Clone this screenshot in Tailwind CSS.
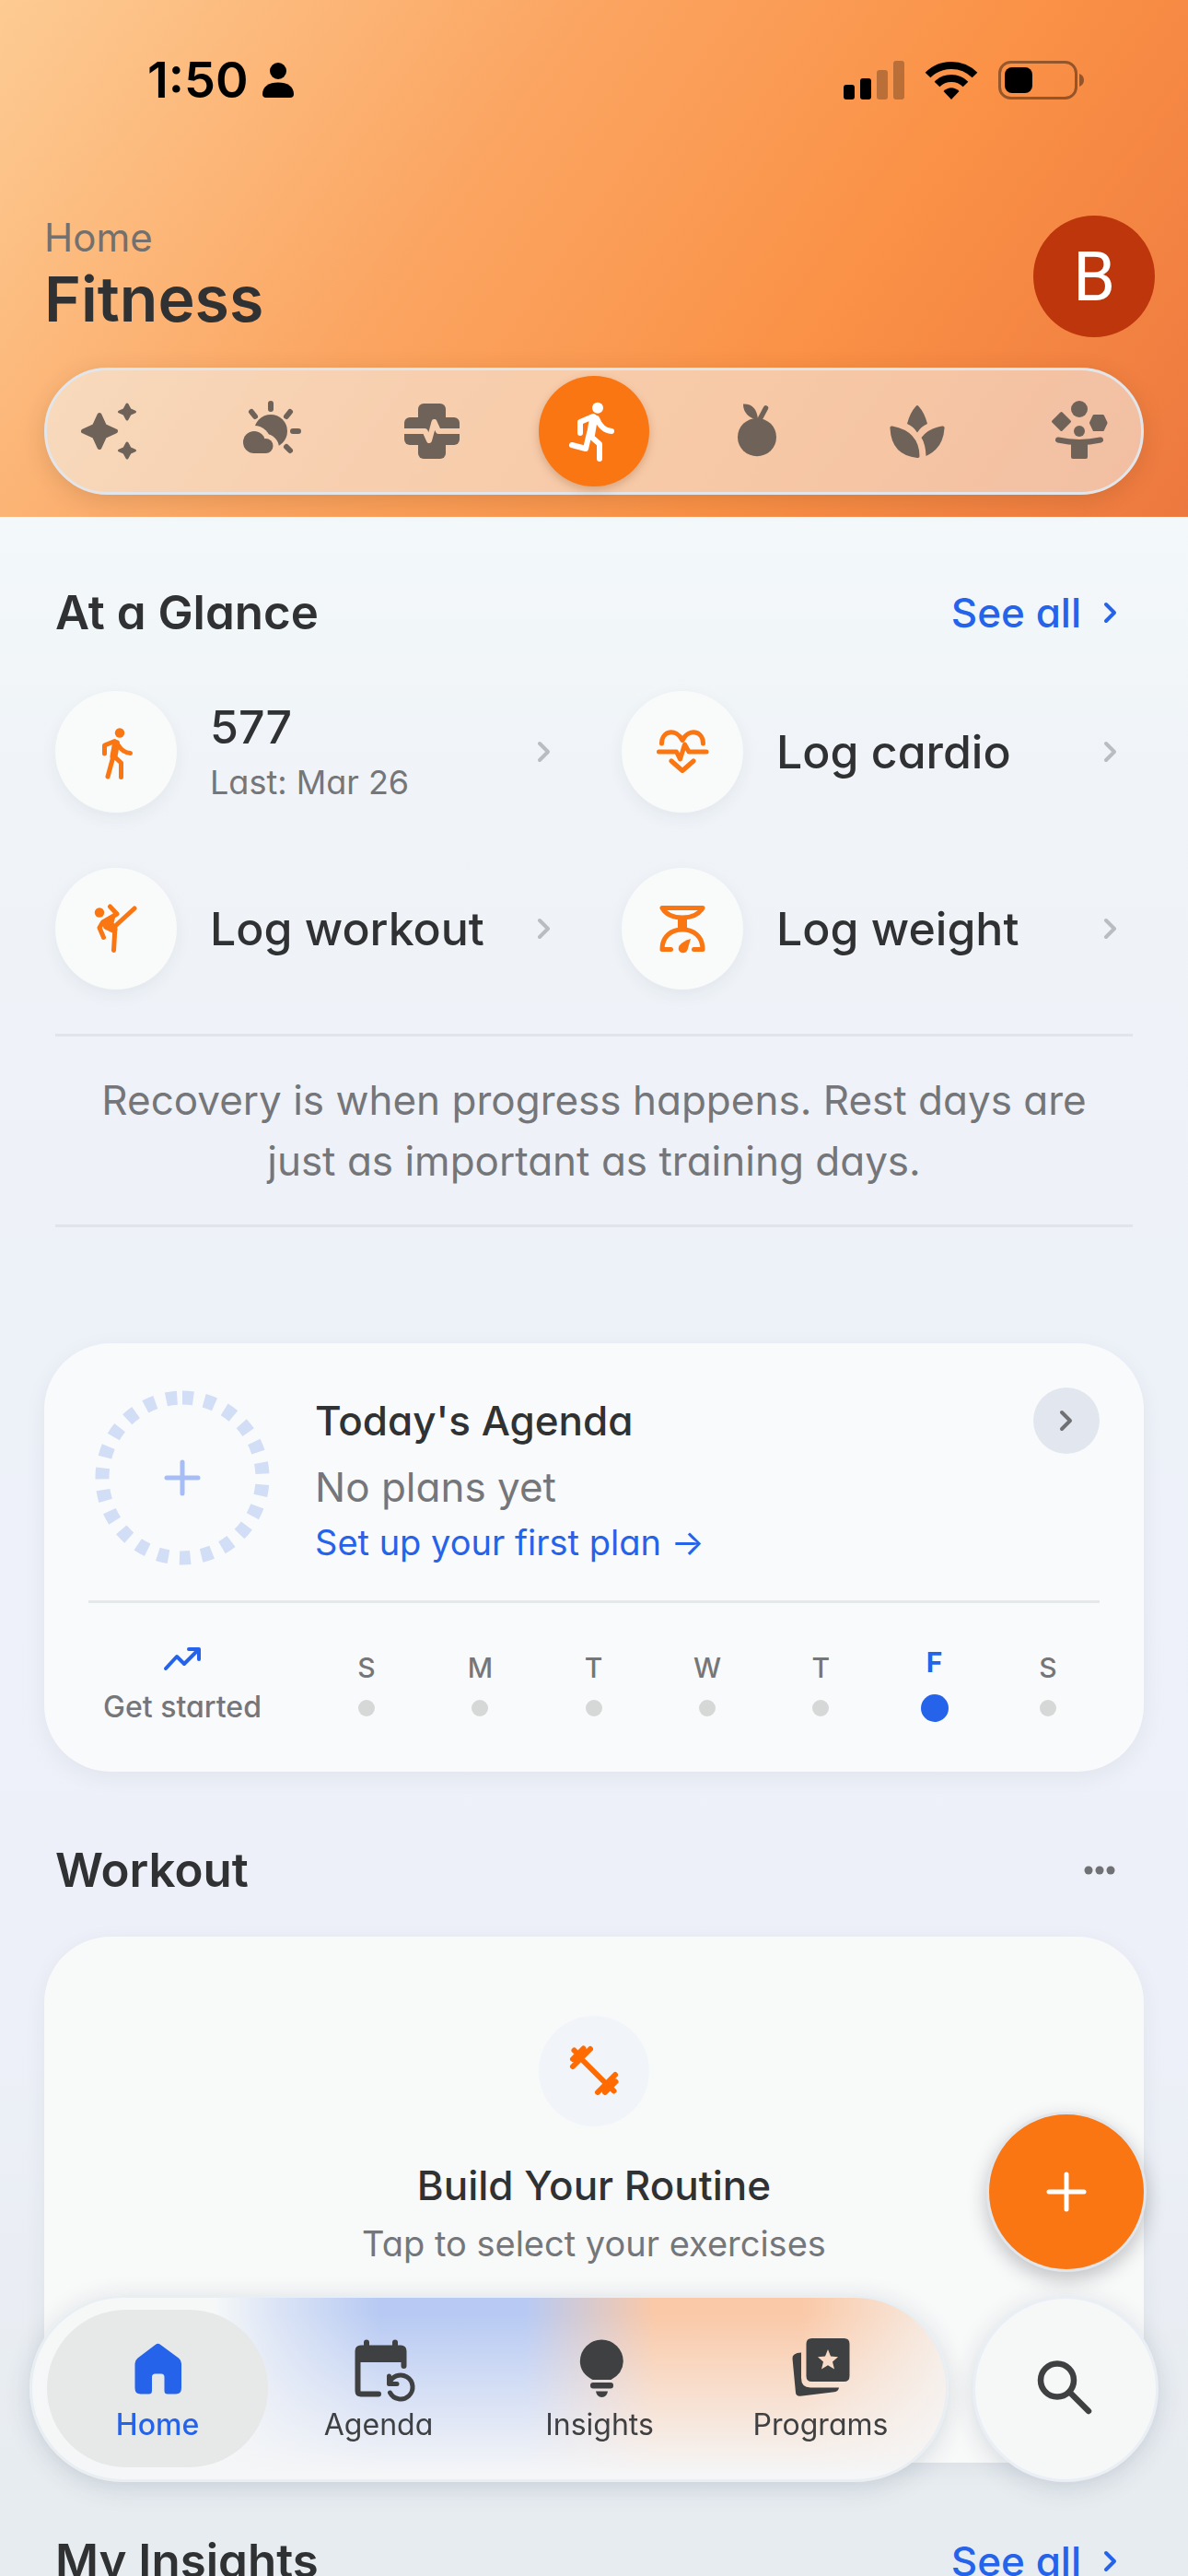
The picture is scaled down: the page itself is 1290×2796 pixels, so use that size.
<!DOCTYPE html>
<html lang="en">
<head>
  <meta charset="UTF-8" />
  <meta name="viewport" content="width=device-width, initial-scale=1.0"/>
  <title>Fitness</title>
  <script src="https://cdn.jsdelivr.net/npm/@tailwindcss/browser@4"></script>
</head>
<body class="h-screen overflow-hidden bg-[linear-gradient(to_bottom,#f3f8fa_20%,#f0f4f8_30%,#edf1f8_55%,#edf0f8_78%,#e7ecf0_97%)] font-[Inter,sans-serif] [font-feature-settings:'cv11'] text-[#303133]">

  <!-- Header -->
  <header class="bg-[linear-gradient(125deg,#fdcb93_0%,#fba562_38%,#fa9146_68%,#ed783f_100%)] pl-12 pr-9 pb-6">
    <div class="flex h-[174px] items-center justify-between pl-[112px] pr-[76px] text-black">
      <div class="flex items-center gap-3.5">
        <span class="text-[54px] leading-[60px] font-semibold">1:50</span>
        <svg class="h-10 w-9" viewBox="0 0 36 40" fill="currentColor" aria-hidden="true"><circle cx="18" cy="10" r="9"/><path d="M1 35C1 27 8 22.500 18 22.500S35 27 35 35Q35 39 31 39H5Q1 39 1 35Z"/></svg>
      </div>
      <div class="flex items-center gap-[22px]">
        <svg class="h-[42px] w-[66px]" viewBox="0 0 66 42" fill="currentColor" aria-hidden="true"><rect y="26" width="12" height="16" rx="3"/><rect x="18" y="19" width="12" height="23" rx="3"/><g opacity=".25"><rect x="36" y="10" width="12" height="32" rx="3"/><rect x="54" width="12" height="42" rx="3"/></g></svg>
        <svg class="h-[42px] w-[58px]" viewBox="0 0 58 42" aria-hidden="true"><g fill="none" stroke="currentColor" stroke-width="8"><path d="M3.500 15.500a36 36 0 0 1 51 0"/><path d="M13.500 25.500a22 22 0 0 1 31 0"/></g><path fill="currentColor" d="M29 42l-8.500-9q8.500-7.500 17 0z"/></svg>
        <svg class="h-[42px] w-[94px]" viewBox="0 0 94 42" aria-hidden="true"><rect x="1.500" y="1.500" width="83" height="39" rx="12" fill="none" stroke="#000" stroke-opacity=".4" stroke-width="3"/><rect x="7" y="7" width="30" height="28" rx="8"/><path d="M88 14q5 2 5 7t-5 7z" fill-opacity=".4"/></svg>
      </div>
    </div>

    <div class="mt-[60px] flex items-center justify-between">
      <div>
        <p class="text-[42px] leading-[48px] text-[#73706e]">Home</p>
        <h1 class="text-[68px] leading-[84px] font-semibold">Fitness</h1>
      </div>
      <button class="size-[132px] rounded-full bg-[#bd360c] font-[Roboto,sans-serif] text-[74px] text-white" aria-label="Profile">B</button>
    </div>

    <nav class="mt-[33px] mr-3 flex items-center justify-between rounded-full border-3 border-[#e2e5ea] bg-[#f4f6f4]/55 px-[7px] py-1.5 text-[#6f6259] shadow-[0_6px_24px_rgba(80,50,20,0.16)]">
      <button class="grid size-[120px] place-items-center" aria-label="Overview">
        <svg class="size-18" viewBox="0 0 72 72" fill="currentColor" stroke="currentColor" stroke-width="5" stroke-linejoin="round"><path d="M26 18.500l5.500 12 12 5.500-12 5.500-5.500 12-5.500-12-12-5.500 12-5.500z"/><path stroke-width="3" d="M56 7l3 5.500 5.500 2.500-5.500 2.500-3 5.500-3-5.500-5.500-2.500 5.500-2.500zM56 49l3 5.500 5.500 2.500-5.500 2.500-3 5.500-3-5.500-5.500-2.500 5.500-2.500z"/></svg>
      </button>
      <button class="grid size-[120px] place-items-center" aria-label="Weather">
        <svg class="size-18" viewBox="0 0 72 72" fill="currentColor"><mask id="sun"><path fill="#fff" d="M0 0h72v72H0z"/><circle cx="18" cy="48" r="18" fill="#000"/><circle cx="30" cy="54" r="15" fill="#000"/></mask><circle cx="36" cy="36" r="18" mask="url(#sun)"/><path d="M36 6v6M15 15l4 5M57 15l-4 5M60 36h6M53 53l4 4" fill="none" stroke="currentColor" stroke-width="6" stroke-linecap="round"/><circle cx="18" cy="48" r="12"/><circle cx="30.500" cy="52" r="8"/><path d="M17 50h14v10H17z"/></svg>
      </button>
      <button class="grid size-[120px] place-items-center" aria-label="Health">
        <svg class="size-18" viewBox="0 0 72 72" fill="currentColor"><mask id="pulse"><path fill="#fff" d="M0 0h72v72H0z"/><path d="M0 36h28.500l4.500 10 5.500-20 4.500 10h29" fill="none" stroke="#000" stroke-width="6" stroke-linejoin="round"/></mask><g mask="url(#pulse)"><rect x="21" y="6" width="30" height="60" rx="6"/><rect x="6" y="21" width="60" height="30" rx="6"/></g></svg>
      </button>
      <button class="grid size-[120px] place-items-center rounded-full bg-[#f97613] text-white shadow-[0_4px_10px_rgba(120,60,20,0.25)]" aria-label="Fitness" aria-current="page">
        <svg class="size-18" viewBox="0 0 72 72" fill="none" stroke="currentColor" stroke-width="6" stroke-linecap="round" stroke-linejoin="round"><circle cx="40" cy="10.700" r="6" fill="currentColor" stroke="none"/><path d="M21 38V26l14-6M39 22q5 13 16 14M33 42l9 8v16M31 38l-4 17-15-4"/><path stroke-width="9" d="M35.500 22l-3 18"/></svg>
      </button>
      <button class="grid size-[120px] place-items-center" aria-label="Nutrition">
        <svg class="size-18" viewBox="0 0 72 72" fill="currentColor"><ellipse cx="37" cy="42.500" rx="21" ry="20.700"/><path d="M22 6.500Q37 6 38 24Q22 20 22 6.500Z"/><path d="M46.500 11L39 25" stroke="currentColor" stroke-width="5.500" stroke-linecap="round"/></svg>
      </button>
      <button class="grid size-[120px] place-items-center" aria-label="Mindfulness">
        <svg class="size-18" viewBox="0 0 72 72" fill="currentColor"><path d="M34.500 9Q36 7 37.500 9Q44 16 47 28Q40 31 36 37.500Q32 31 25 28Q28 16 34.500 9Z"/><path d="M6.500 33Q6 30 9 30.500Q38 36 38.500 63Q38.500 65.500 36 65Q8 62 6.500 33Z"/><path d="M40.500 43Q48 33 63 30.500Q66 30 65.500 33Q64 55 45.500 63Q45 50 40.500 43Z"/></svg>
      </button>
      <button class="grid size-[120px] place-items-center" aria-label="Activities">
        <svg class="size-18" viewBox="0 0 72 72" fill="currentColor" stroke="currentColor" stroke-linejoin="round"><g stroke="none"><circle cx="36" cy="12" r="9"/><circle cx="36" cy="36" r="6"/><rect x="27" y="46" width="18" height="20" rx="2"/></g><path stroke-width="3" d="M16.500 16.500l9 9-9 9-9-9zM52 19.500h9.500l3.500 7.500-3.500 7.500H52L48.500 27z"/><path d="M13 45.500q23 5 46 0" fill="none" stroke-width="6" stroke-linecap="round"/></svg>
      </button>
    </nav>
  </header>

  <main>
    <!-- At a Glance -->
    <section class="px-15 pt-[68px]">
      <div class="flex items-center justify-between pr-4">
        <h2 class="text-[51px] leading-[72px] font-semibold">At a Glance</h2>
        <a href="#" class="flex items-center gap-6 text-[44px] leading-[72px] font-medium text-[#2563eb]">See all
          <svg class="h-7 w-4" viewBox="0 0 16 28" fill="none" stroke="currentColor" stroke-width="4" stroke-linecap="round" stroke-linejoin="round"><path d="M3 5l9 9-9 9"/></svg>
        </a>
      </div>

      <div class="mt-[49px] grid grid-cols-2 gap-15">
        <a href="#" class="flex items-center pr-4">
          <span class="grid size-[132px] place-items-center rounded-full bg-[#f9fafa] text-[#f97613] shadow-[0_6px_18px_rgba(30,50,70,0.06)]">
            <svg class="size-15" viewBox="0 0 60 60" fill="none" stroke="currentColor" stroke-width="5" stroke-linecap="round" stroke-linejoin="round"><circle cx="34" cy="9.500" r="5.200" fill="currentColor" stroke="none"/><path d="M17.500 32v-9l11-4.500M32.500 23q5 8 13 8.500M27 35l-6 22M28 35l7.500 7v15.500"/><path stroke-width="8" d="M30 21l-2.500 14"/></svg>
          </span>
          <span class="ml-9 flex-1">
            <span class="block text-[50px] leading-[66px] font-medium">577</span>
            <span class="block text-[36px] leading-[54px] text-[#75767a]">Last: Mar 26</span>
          </span>
          <svg class="h-7 w-4" viewBox="0 0 16 28" fill="none" stroke="#b9bcc0" stroke-width="4" stroke-linecap="round" stroke-linejoin="round"><path d="M3 5l9 9-9 9"/></svg>
        </a>
        <a href="#" class="flex items-center pr-4">
          <span class="grid size-[132px] place-items-center rounded-full bg-[#f9fafa] text-[#f97613] shadow-[0_6px_18px_rgba(30,50,70,0.06)]">
            <svg class="size-15" viewBox="0 0 60 60" fill="none" stroke="currentColor" stroke-width="5" stroke-linecap="round" stroke-linejoin="round"><path d="M7.500 21C7.500 7 23 4 30 17.500C37 4 52.500 7 52.500 21M4.500 30h19l4 8 5-16 4.500 8h19M18 40l12 10.500L42 40"/></svg>
          </span>
          <span class="ml-9 flex-1 text-[50px] leading-[66px] font-medium">Log cardio</span>
          <svg class="h-7 w-4" viewBox="0 0 16 28" fill="none" stroke="#b9bcc0" stroke-width="4" stroke-linecap="round" stroke-linejoin="round"><path d="M3 5l9 9-9 9"/></svg>
        </a>
        <a href="#" class="flex items-center pr-4">
          <span class="grid size-[132px] place-items-center rounded-full bg-[#f9fafa] text-[#f97613] shadow-[0_6px_18px_rgba(30,50,70,0.06)]">
            <svg class="size-15" viewBox="0 0 60 60" fill="none" stroke="currentColor" stroke-width="5" stroke-linecap="round" stroke-linejoin="round"><circle cx="12" cy="12.500" r="5.200" fill="currentColor" stroke="none"/><path d="M23.500 6l7.500 8-15.500 9-3.500 6 4.500 10.500M27 29L50 8M29 28l-1.500 25.500"/><path fill="currentColor" stroke-width="3" d="M16 22l12-6-2 8 4 7-4 2-8-4z"/></svg>
          </span>
          <span class="ml-9 flex-1 text-[50px] leading-[66px] font-medium">Log workout</span>
          <svg class="h-7 w-4" viewBox="0 0 16 28" fill="none" stroke="#b9bcc0" stroke-width="4" stroke-linecap="round" stroke-linejoin="round"><path d="M3 5l9 9-9 9"/></svg>
        </a>
        <a href="#" class="flex items-center pr-4">
          <span class="grid size-[132px] place-items-center rounded-full bg-[#f9fafa] text-[#f97613] shadow-[0_6px_18px_rgba(30,50,70,0.06)]">
            <svg class="size-15" viewBox="0 0 60 60" fill="none" stroke="currentColor" stroke-width="5" stroke-linecap="round" stroke-linejoin="round"><path d="M8 7.500h44q-6 10.500-22 10.500T8 7.500zM17.500 52.500H8C8 38 18 31 30 31s22 7 22 21.500h-9.500"/><path stroke-width="10" stroke-linecap="butt" d="M30 18v13"/><path stroke="none" fill="currentColor" d="M39 41l-3.500 12q-2 4-6.500 3-5-2-2.500-7.500Q31 43 39 41z"/></svg>
          </span>
          <span class="ml-9 flex-1 text-[50px] leading-[66px] font-medium">Log weight</span>
          <svg class="h-7 w-4" viewBox="0 0 16 28" fill="none" stroke="#b9bcc0" stroke-width="4" stroke-linecap="round" stroke-linejoin="round"><path d="M3 5l9 9-9 9"/></svg>
        </a>
      </div>

      <p class="mt-12 border-y-3 border-[#e1e5eb] px-9 py-9 text-center text-[44px] leading-[66px] text-[#75767a]">Recovery is when progress happens. Rest days are just as important as training days.</p>
    </section>

    <!-- Agenda card -->
    <section class="mx-12 mt-[126px] rounded-[72px] bg-[#f9fafb] px-12 pt-12 shadow-[0_6px_24px_rgba(30,50,70,0.06)]">
      <div class="flex border-b-3 border-[#e3e8ea] pb-9">
        <div class="flex w-[204px] items-center justify-center">
          <svg class="size-48" viewBox="0 0 192 192" fill="none"><circle cx="96" cy="96" r="87" stroke="#d2ddf6" stroke-width="15" stroke-dasharray="12 12" transform="rotate(-90 96 96)"/><path d="M96 79v34M79 96h34" stroke="#a6bdf5" stroke-width="5" stroke-linecap="round"/></svg>
        </div>
        <div class="ml-[42px] flex-1 pt-[3px]">
          <h3 class="text-[44px] leading-[66px] font-medium">Today's Agenda</h3>
          <p class="mt-1.5 text-[44px] leading-[66px] text-[#75767a]">No plans yet</p>
          <a href="#" class="block text-[38px] leading-[54px] text-[#2563eb]">Set up your first plan →</a>
        </div>
        <button class="grid size-18 place-items-center rounded-full bg-[#e2e7ef]" aria-label="Open agenda">
          <svg class="h-7 w-4" viewBox="0 0 16 28" fill="none" stroke="#707175" stroke-width="4" stroke-linecap="round" stroke-linejoin="round"><path d="M3 5l9 9-9 9"/></svg>
        </button>
      </div>
      <div class="flex items-center justify-between pt-[38px] pr-[26px] pb-[46px] text-[30px] leading-9 font-medium text-[#75767a]">
        <div class="flex w-[204px] flex-col items-center gap-[9px] pb-1.5">
          <svg class="size-12" viewBox="0 0 48 48" fill="none" stroke="#2563eb" stroke-width="4" stroke-linecap="round" stroke-linejoin="round"><path d="M6 33l12-13 8 8 15-15M31 12h11v11"/></svg>
          <span class="text-[32px]">Get started</span>
        </div>
        <ul class="ml-[68px] flex flex-1 items-center justify-between">
          <li class="flex w-15 flex-col items-center gap-[17px]">S<i class="size-[18px] rounded-full bg-[#d6d7d7]"></i></li>
          <li class="flex w-15 flex-col items-center gap-[17px]">M<i class="size-[18px] rounded-full bg-[#d6d7d7]"></i></li>
          <li class="flex w-15 flex-col items-center gap-[17px]">T<i class="size-[18px] rounded-full bg-[#d6d7d7]"></i></li>
          <li class="flex w-15 flex-col items-center gap-[17px]">W<i class="size-[18px] rounded-full bg-[#d6d7d7]"></i></li>
          <li class="flex w-15 flex-col items-center gap-[17px]">T<i class="size-[18px] rounded-full bg-[#d6d7d7]"></i></li>
          <li class="flex w-15 flex-col items-center gap-[17px] font-bold text-[#2563eb]">F<i class="size-[30px] rounded-full bg-[#2563eb]"></i></li>
          <li class="flex w-15 flex-col items-center gap-[17px]">S<i class="size-[18px] rounded-full bg-[#d6d7d7]"></i></li>
        </ul>
      </div>
    </section>

    <!-- Workout -->
    <section class="px-12 pt-[71px]">
      <div class="flex items-center justify-between pl-3 pr-6">
        <h2 class="text-[51px] leading-[72px] font-semibold">Workout</h2>
        <button class="grid size-12 place-items-center" aria-label="More options">
          <svg class="h-3 w-9" viewBox="0 0 36 12" fill="#707175"><circle cx="6" cy="6" r="4.500"/><circle cx="18" cy="6" r="4.500"/><circle cx="30" cy="6" r="4.500"/></svg>
        </button>
      </div>
      <div class="mt-9 flex flex-col items-center rounded-[72px] bg-[#f8f9f9] pt-[86px] pb-[211px] shadow-[0_6px_24px_rgba(30,50,70,0.06)]">
        <div class="grid size-[120px] place-items-center rounded-full bg-[#f1f5fa]">
          <svg class="size-15" viewBox="0 0 60 60" fill="none" stroke="#ff6b00" stroke-width="6" stroke-linecap="round" stroke-linejoin="round"><path d="M7 25L26 6M7 17L18.500 5.500M8.500 7.500l8 8M34 53L53 34M42 53l11.500-11.500M51.500 51.500l-8-8M16.500 17L42 42.500"/></svg>
        </div>
        <h3 class="mt-[31px] text-[44px] leading-[66px] font-medium">Build Your Routine</h3>
        <p class="mt-[3px] text-[38px] leading-[54px] text-[#75767a]">Tap to select your exercises</p>
      </div>
    </section>

    <!-- My Insights -->
    <section class="px-15 pt-[71px]">
      <div class="flex items-center justify-between pr-4">
        <h2 class="text-[51px] leading-[72px] font-semibold">My Insights</h2>
        <a href="#" class="flex items-center gap-6 text-[44px] leading-[72px] font-medium text-[#2563eb]">See all
          <svg class="h-7 w-4" viewBox="0 0 16 28" fill="none" stroke="currentColor" stroke-width="4" stroke-linecap="round" stroke-linejoin="round"><path d="M3 5l9 9-9 9"/></svg>
        </a>
      </div>
    </section>
  </main>

  <!-- Floating add button -->
  <button class="fixed right-[45px] bottom-[330px] grid size-[174px] place-items-center rounded-full border-3 border-[#e2e5ea] bg-[#f97613] shadow-[0_8px_20px_rgba(30,30,40,0.25)]" aria-label="Add">
    <svg class="size-12" viewBox="0 0 48 48" stroke="#fff" stroke-width="5" stroke-linecap="round"><path d="M24 5v38M5 24h38"/></svg>
  </button>

  <!-- Bottom bar -->
  <div class="fixed right-8 bottom-[102px] left-8 flex items-center justify-between text-[32px] leading-9 text-[#3f4042]">
    <nav class="flex rounded-full border-3 border-[#e9eef3] bg-[linear-gradient(to_top,#f5f6f7_4%,#f5f6f7b0_30%,#f5f6f700_90%),linear-gradient(to_right,#f6f8f8_20%,#dbe4f6_27%,#b8caf3_38%,#b8caf3_54%,#fac9a8_68%,#fac9a8_84%,#f6ede6_100%)] bg-origin-border px-4 py-[13px] shadow-[0_6px_28px_rgba(40,60,90,0.16)]">
      <a href="#" class="flex h-[171px] w-60 flex-col items-center justify-center gap-1.5 rounded-full bg-[#e7e8e8] font-medium text-[#2563eb]" aria-current="page">
        <svg class="size-18" viewBox="0 0 72 72" fill="currentColor"><path d="M33 9.500Q36.500 6 40 9.500L59 23.500Q62 26 62 29.500V56Q62 62.500 56 62.500H47Q43.500 62.500 43.500 59V44Q43.500 40.500 40 40.500H33.500Q30 40.500 30 44V59Q30 62.500 26.500 62.500H17.500Q11.500 62.500 11.500 56V29.500Q11.500 26 14.500 23.500Z"/></svg>
        Home
      </a>
      <a href="#" class="flex h-[171px] w-60 flex-col items-center justify-center gap-1.5">
        <svg class="size-18 overflow-visible" viewBox="0 0 72 72" fill="none" stroke="currentColor" stroke-width="6" stroke-linecap="round" stroke-linejoin="round"><path d="M23 6.500v6M54 6.500v6M36 62.500H17q-3.500 0-3.500-3.500V16q0-3.500 3.500-3.500h43q3.500 0 3.500 3.500v16"/><path fill="currentColor" stroke="none" d="M12 12h53v16H12z"/><path stroke-width="5" d="M47.500 43v8.500H56M47.500 51.500A13 13 0 1 1 48.500 61"/></svg>
        Agenda
      </a>
      <a href="#" class="flex h-[171px] w-60 flex-col items-center justify-center gap-1.5">
        <svg class="size-18" viewBox="0 0 72 72" fill="currentColor"><path d="M28.500 47Q15 40 14.800 27a23.500 23.500 0 0 1 47 0Q61.500 40 48.500 47z"/><rect x="26" y="50" width="25" height="6.500" rx="3"/><path d="M32 59.500h13q-1 6.500-6.500 6.500T32 59.500z"/></svg>
        Insights
      </a>
      <a href="#" class="flex h-[171px] w-60 flex-col items-center justify-center gap-1.5">
        <svg class="size-18" viewBox="0 0 72 72" fill="currentColor"><path fill-rule="evenodd" d="M26.500 2h35q6 0 6 6v35q0 6-6 6h-35q-6 0-6-6V8q0-6 6-6zM44 14l-3 7.500-8 .7 6 5.300-2 8 7-4.300 7 4.300-2-8 6-5.300-8-.7z"/><path d="M5.500 24Q5 18 15 17.500V45q0 10.500 10 10.500h31q-.5 4-5 4.800L14 64.700Q9.500 65 9 61z"/></svg>
        Programs
      </a>
    </nav>
    <button class="grid size-[202px] place-items-center rounded-full border-3 border-[#eaeef5] bg-[#f6f8f8] shadow-[0_6px_28px_rgba(40,60,90,0.16)]" aria-label="Search">
      <svg class="size-18" viewBox="0 0 72 72" fill="none" stroke="currentColor" stroke-width="6.500" stroke-linecap="round"><circle cx="27" cy="26.500" r="18"/><path d="M41 40l20 20"/></svg>
    </button>
  </div>

</body>
</html>
